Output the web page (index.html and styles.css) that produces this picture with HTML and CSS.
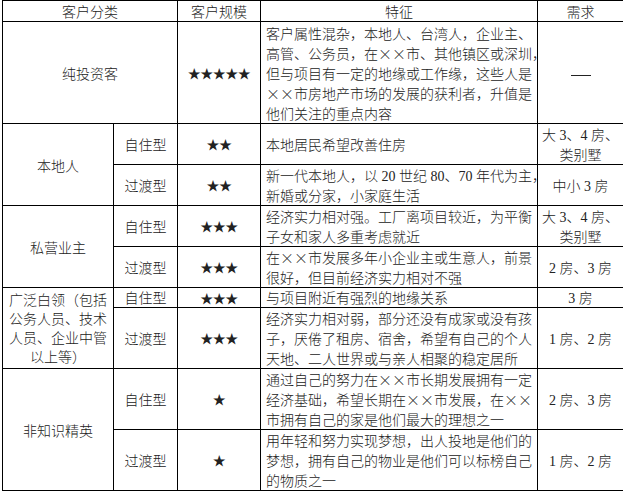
FILE: index.html
```html
<!DOCTYPE html>
<html lang="zh-CN">
<head>
<meta charset="utf-8">
<title>客户分类</title>
<link rel="stylesheet" href="styles.css">
</head>
<body>
<table class="grid">
  <colgroup>
    <col class="c1"><col class="c2"><col class="c3"><col class="c4"><col class="c5">
  </colgroup>
  <tr class="head">
    <th colspan="2">客户分类</th>
    <th>客户规模</th>
    <th>特征</th>
    <th>需求</th>
  </tr>
  <tr class="first">
    <td colspan="2">纯投资客</td>
    <td class="stars">★★★★★</td>
    <td class="feat">客户属性混杂，本地人、台湾人，企业主、<br>高管、公务员，在<span class="x">×</span><span class="x">×</span>市、其他镇区或深圳，<br>但与项目有一定的地缘或工作缘，这些人是<br><span class="x">×</span><span class="x">×</span>市房地产市场的发展的获利者，升值是<br>他们关注的重点内容</td>
    <td><span class="dash"></span></td>
  </tr>
  <tr>
    <td rowspan="2">本地人</td>
    <td>自住型</td>
    <td class="stars">★★</td>
    <td class="feat">本地居民希望改善住房</td>
    <td>大<span class="n"> 3</span>、<span class="n">4 </span>房、<br>类别墅</td>
  </tr>
  <tr>
    <td>过渡型</td>
    <td class="stars">★★</td>
    <td class="feat">新一代本地人，以<span class="n"> 20 </span>世纪<span class="n"> 80</span>、<span class="n">70 </span>年代为主，<br>新婚或分家，小家庭生活</td>
    <td>中小<span class="n"> 3 </span>房</td>
  </tr>
  <tr>
    <td rowspan="2">私营业主</td>
    <td>自住型</td>
    <td class="stars">★★★</td>
    <td class="feat">经济实力相对强。工厂离项目较近，为平衡<br>子女和家人多重考虑就近</td>
    <td>大<span class="n"> 3</span>、<span class="n">4 </span>房、<br>类别墅</td>
  </tr>
  <tr>
    <td>过渡型</td>
    <td class="stars">★★★</td>
    <td class="feat">在<span class="x">×</span><span class="x">×</span>市发展多年小企业主或生意人，前景<br>很好，但目前经济实力相对不强</td>
    <td><span class="n">2 </span>房、<span class="n">3 </span>房</td>
  </tr>
  <tr class="thin">
    <td rowspan="2">广泛白领（包括<br>公务人员、技术<br>人员、企业中管<br>以上等）</td>
    <td>自住型</td>
    <td class="stars">★★★</td>
    <td class="feat">与项目附近有强烈的地缘关系</td>
    <td><span class="n">3 </span>房</td>
  </tr>
  <tr>
    <td>过渡型</td>
    <td class="stars">★★★</td>
    <td class="feat">经济实力相对弱，部分还没有成家或没有孩<br>子，厌倦了租房、宿舍，希望有自己的个人<br>天地、二人世界或与亲人相聚的稳定居所</td>
    <td><span class="n">1 </span>房、<span class="n">2 </span>房</td>
  </tr>
  <tr>
    <td rowspan="2">非知识精英</td>
    <td>自住型</td>
    <td class="stars">★</td>
    <td class="feat">通过自己的努力在<span class="x">×</span><span class="x">×</span>市长期发展拥有一定<br>经济基础，希望长期在<span class="x">×</span><span class="x">×</span>市发展，在<span class="x">×</span><span class="x">×</span><br>市拥有自己的家是他们最大的理想之一</td>
    <td><span class="n">2 </span>房、<span class="n">3 </span>房</td>
  </tr>
  <tr>
    <td>过渡型</td>
    <td class="stars">★</td>
    <td class="feat">用年轻和努力实现梦想，出人投地是他们的<br>梦想，拥有自己的物业是他们可以标榜自己<br>的物质之一</td>
    <td><span class="n">1 </span>房、<span class="n">2 </span>房</td>
  </tr>
</table>
</body>
</html>
```

FILE: styles.css
```css
html, body {
  margin: 0;
  padding: 0;
  background: #fff;
}

.grid {
  margin: 0 0 0 2px;
  border-collapse: collapse;
  table-layout: fixed;
  width: 621px;
  font-family: "Noto Sans CJK SC", sans-serif;
  font-size: 14px;
  line-height: 20px;
  color: #222;
}

.c1 { width: 111px; }
.c2 { width: 64px; }
.c3 { width: 83px; }
.c4 { width: 277px; }
.c5 { width: 86px; }

.grid th,
.grid td {
  border: 1px solid #000;
  padding: 0 4px;
  text-align: center;
  vertical-align: middle;
  white-space: nowrap;
  font-weight: 300;
}

.grid .feat {
  text-align: left;
  padding-left: 5px;
}

.grid .first td {
  padding-top: 1px;
}

.grid .thin td {
  line-height: 19px;
}

.n {
  font-family: "Liberation Serif", serif;
  line-height: 1;
}

.stars {
  font-size: 13px;
  letter-spacing: -0.5px;
}

.x {
  display: inline-block;
  width: 1em;
  text-align: center;
}

.dash {
  display: inline-block;
  width: 20px;
  height: 1px;
  background: #222;
  vertical-align: middle;
}
```
